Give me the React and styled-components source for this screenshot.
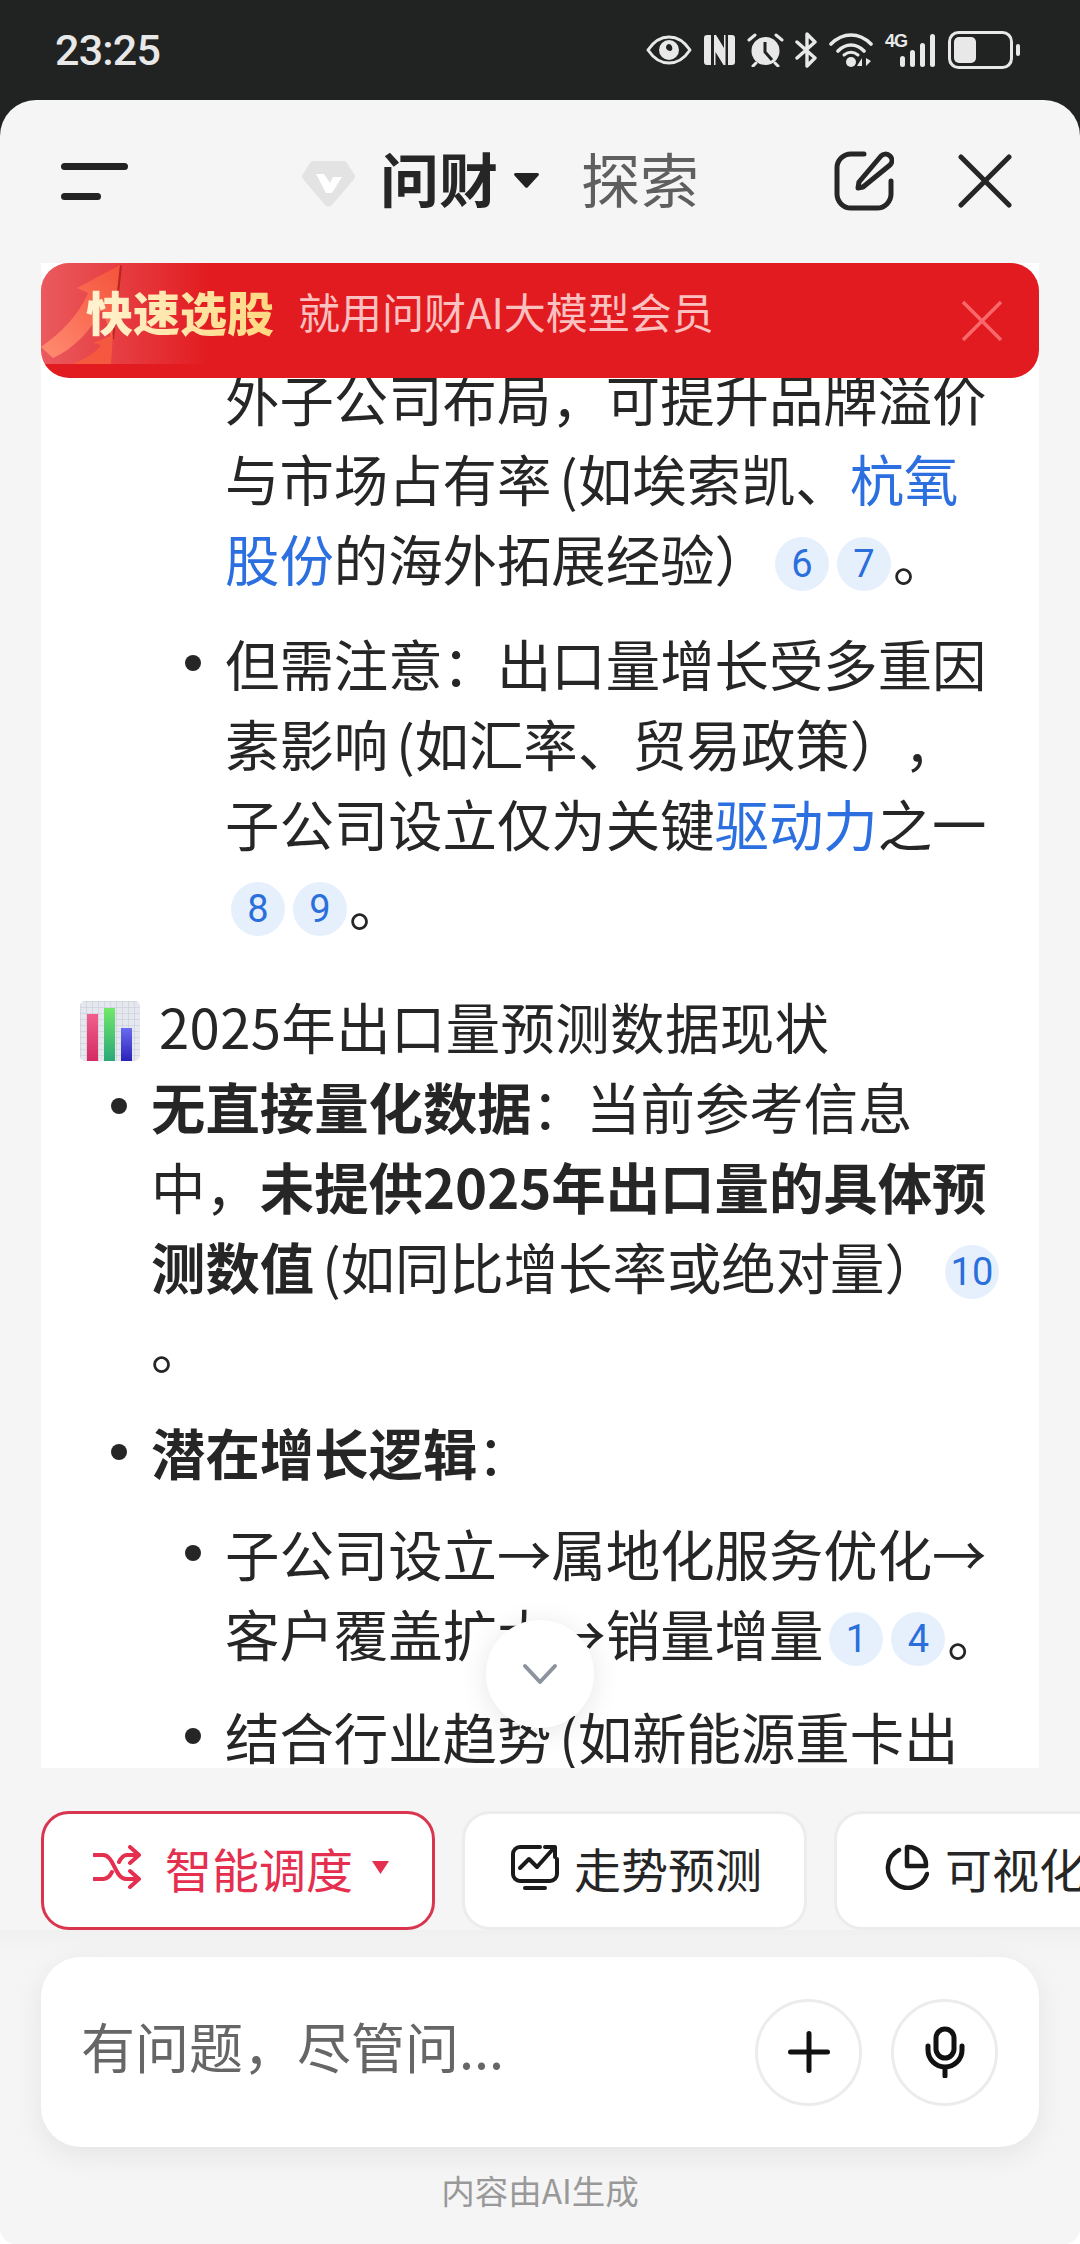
import React from 'react';
import styled, { createGlobalStyle } from 'styled-components';

const GlobalStyle = createGlobalStyle`
    html, body {
        margin: 0;
        padding: 0;
        background: #fff;
    }
    * {
        box-sizing: border-box;
    }
`;

const FONT = `"Noto Sans CJK SC", "Noto Sans", sans-serif`;

const Badge = ({ n }) => <Cite>{n}</Cite>;

const App = () => {
    return (
        <Page>
            <GlobalStyle />
            <StatusBar>
                <Clock>23:25</Clock>
                <StatusIcons>
                    <svg width="46" height="30" viewBox="0 0 46 30">
                        <path d="M2 15C8 6 15 2 23 2s15 4 21 13c-6 9-13 13-21 13S8 24 2 15z" fill="none" stroke="#e8e8e8" strokeWidth="3" strokeLinejoin="round" />
                        <path fillRule="evenodd" d="M23 5a10 10 0 1 0 0 20 10 10 0 0 0 0-20zm-1 4a4 4 0 0 1 3 7 5 5 0 0 1-5-3 4 4 0 0 1 2-4z" fill="#e8e8e8" />
                    </svg>
                    <NfcIcon width="31" height="32" viewBox="0 0 31 32">
                        <path d="M3 1h4v30H3a3 3 0 0 1-3-3V4a3 3 0 0 1 3-3zM24 1h4a3 3 0 0 1 3 3v24a3 3 0 0 1-3 3h-4z" fill="#e8e8e8" />
                        <path d="M10 1h2l8 13V1h1.5v30h-2l-8-13v13H10z" fill="#e8e8e8" />
                    </NfcIcon>
                    <AlarmIcon width="37" height="34" viewBox="0 0 37 34">
                        <circle cx="18.5" cy="18" r="14" fill="#e8e8e8" />
                        <path d="M18 9v10l7 8" fill="none" stroke="#212323" strokeWidth="3" />
                        <path d="M2 7l6-5M35 7l-6-5M6 33l3-3M31 33l-3-3" stroke="#e8e8e8" strokeWidth="3" strokeLinecap="round" />
                    </AlarmIcon>
                    <BluetoothIcon width="22" height="36" viewBox="0 0 22 36">
                        <path d="M2 10l18 16-8 8V2l8 8L2 26" fill="none" stroke="#e8e8e8" strokeWidth="3.4" strokeLinejoin="round" strokeLinecap="round" />
                    </BluetoothIcon>
                    <WifiIcon width="44" height="36" viewBox="0 0 44 36">
                        <path d="M2 12C14 0 30 0 42 12M9 19c8-8 18-8 26 0" fill="none" stroke="#e8e8e8" strokeWidth="3.6" strokeLinecap="round" />
                        <path d="M15 23c5-4 9-4 14 0" fill="none" stroke="#e8e8e8" strokeWidth="3" strokeLinecap="round" />
                        <circle cx="22" cy="30" r="5" fill="#e8e8e8" />
                        <path d="M33 34v-8l-5 8zM37 26v8l5-5z" fill="#e8e8e8" />
                    </WifiIcon>
                    <Signal>
                        <SignalLabel>4G</SignalLabel>
                        <Bar $h={11} />
                        <Bar $h={17} />
                        <Bar $h={24} />
                        <Bar $h={33} />
                    </Signal>
                    <svg width="73" height="38" viewBox="0 0 73 38">
                        <rect x="1.5" y="1.5" width="62" height="35" rx="9" fill="none" stroke="#e8e8e8" strokeWidth="3" />
                        <rect x="6" y="6" width="22" height="26" rx="5" fill="#e8e8e8" />
                        <rect x="68" y="13" width="4" height="12" rx="2" fill="#e8e8e8" />
                    </svg>
                </StatusIcons>
            </StatusBar>

            <Sheet>
                <Header>
                    <MenuButton>
                        <MenuLine $w={67} />
                        <MenuLine $w={40} />
                    </MenuButton>
                    <Nav>
                        <LogoMark width="53" height="46" viewBox="0 0 53 46">
                            <path d="M11 0h31a4 4 0 0 1 3 2l7 11a4 4 0 0 1 0 5L30 44a5 5 0 0 1-7 0L1 18a4 4 0 0 1 0-5L8 2a4 4 0 0 1 3-2z" fill="#e3e3e3" />
                            <path d="M14 13l8 0 6 9 3-6h9l-10 16h-6z" fill="#fff" />
                        </LogoMark>
                        <Title>问财</Title>
                        <NavCaret width="25" height="15" viewBox="0 0 25 15">
                            <path d="M1.5 0h22a1.5 1.5 0 0 1 1 2.5L14 14a2 2 0 0 1-3 0L.5 2.5A1.5 1.5 0 0 1 1.5 0z" fill="#222" />
                        </NavCaret>
                        <NavLink>探索</NavLink>
                    </Nav>
                    <Actions>
                        <svg width="60" height="60" viewBox="0 0 60 60">
                            <path d="M30 3H17A14 14 0 0 0 3 17v26a14 14 0 0 0 14 14h26a14 14 0 0 0 14-14V30" fill="none" stroke="#262626" strokeWidth="5" strokeLinecap="round" />
                            <path d="M29 36l-5 1 1-6L47 5c2-2 6-3 9 0s2 7 0 9z" fill="none" stroke="#262626" strokeWidth="5" strokeLinejoin="round" />
                        </svg>
                        <svg width="54" height="54" viewBox="0 0 54 54">
                            <path d="M3 3l48 48M51 3L3 51" fill="none" stroke="#262626" strokeWidth="5" strokeLinecap="round" />
                        </svg>
                    </Actions>
                </Header>

                <ChatArea>
                    <Scroller>
                        <TopList>
                            <li>
                                <SubList>
                                    <SubItem $continued>
                                        外子公司布局，可提升品牌溢价与市场占有率<OpenParen>(</OpenParen>如埃索凯、<Term>杭氧股份</Term>的海外拓展经验）
                                        <Badge n="6" /><Badge n="7" />。
                                    </SubItem>
                                    <SubItem>
                                        但需注意：出口量增长受多重因素影响<OpenParen>(</OpenParen>如汇率、贸易政策），子公司设立仅为关键<Term>驱动力</Term>之一
                                        <Badge n="8" /><Badge n="9" />。
                                    </SubItem>
                                </SubList>
                            </li>
                        </TopList>

                        <SectionTitle>
                            <SectionIcon width="60" height="60" viewBox="0 0 60 60">
                                <defs>
                                    <pattern id="gridCell" width="6" height="6" patternUnits="userSpaceOnUse">
                                        <path d="M6 0H0v6" fill="none" stroke="#c3c8d4" strokeWidth="1" />
                                    </pattern>
                                    <linearGradient id="pinkBar" x1="0" y1="0" x2="0" y2="1">
                                        <stop offset="0" stopColor="#f0608c" />
                                        <stop offset="1" stopColor="#d42a62" />
                                    </linearGradient>
                                    <linearGradient id="greenBar" x1="0" y1="0" x2="0" y2="1">
                                        <stop offset="0" stopColor="#72e86a" />
                                        <stop offset="1" stopColor="#2aa878" />
                                    </linearGradient>
                                    <linearGradient id="blueBar" x1="0" y1="0" x2="0" y2="1">
                                        <stop offset="0" stopColor="#6a6cf0" />
                                        <stop offset="1" stopColor="#2a22b8" />
                                    </linearGradient>
                                </defs>
                                <rect width="60" height="60" rx="5" fill="#e6e8ef" />
                                <rect width="60" height="60" rx="5" fill="url(#gridCell)" />
                                <rect x="7" y="13" width="11" height="47" fill="url(#pinkBar)" />
                                <rect x="24" y="7" width="11" height="53" fill="url(#greenBar)" />
                                <rect x="41" y="27" width="11" height="33" fill="url(#blueBar)" />
                            </SectionIcon>
                            2025年出口量预测数据现状
                        </SectionTitle>

                        <TopList>
                            <TopItem>
                                <strong>无直接量化数据</strong>：当前参考信息中，<strong>未提供2025年出口量的具体预测数值</strong><OpenParen>(</OpenParen>如同比增长率或绝对量）
                                <Badge n="10" />。
                            </TopItem>
                            <TopItem>
                                <strong>潜在增长逻辑</strong>：
                                <SubList>
                                    <SubItem>
                                        子公司设立→属地化服务优化→客户覆盖扩大→销量增量<Badge n="1" /><Badge n="4" />。
                                    </SubItem>
                                    <SubItem>结合行业趋势<OpenParen>(</OpenParen>如新能源重卡出口增长）</SubItem>
                                </SubList>
                            </TopItem>
                        </TopList>
                    </Scroller>

                    <Banner>
                        <BannerArt width="170" height="101" viewBox="0 0 170 101">
                            <defs>
                                <linearGradient id="bannerFade" x1="0" y1="0" x2="1" y2="0">
                                    <stop offset="0" stopColor="#fff" stopOpacity="0.28" />
                                    <stop offset="1" stopColor="#fff" stopOpacity="0" />
                                </linearGradient>
                                <linearGradient id="arrowFill" x1="0" y1="1" x2="1" y2="0">
                                    <stop offset="0" stopColor="#ff8d72" />
                                    <stop offset="1" stopColor="#f4523a" />
                                </linearGradient>
                            </defs>
                            <path d="M0 0h170v101H0z" fill="url(#bannerFade)" />
                            <path d="M0 84C20 70 38 52 47 30L36 25 79 2 71 76 61 46C50 68 32 86 12 95z" fill="url(#arrowFill)" />
                            <path d="M79 2l2 1-8 73-2 0z" fill="#b8261f" />
                            <path d="M31 101C44 96 54 90 60 82L52 80 72 72 70 101z" fill="#f4583f" />
                        </BannerArt>
                        <BannerLead>快速选股</BannerLead>
                        <BannerText>就用问财AI大模型会员</BannerText>
                        <BannerClose width="40" height="40" viewBox="0 0 40 40">
                            <path d="M1 1l38 38M39 1L1 39" fill="none" stroke="#f9696c" strokeWidth="3.5" />
                        </BannerClose>
                    </Banner>

                    <ScrollDown>
                        <svg width="36" height="22" viewBox="0 0 36 22">
                            <path d="M3 3l15 16L33 3" fill="none" stroke="#8c939f" strokeWidth="4" strokeLinecap="round" strokeLinejoin="round" />
                        </svg>
                    </ScrollDown>
                </ChatArea>

                <ChipRow>
                    <Chip $active $w={394} $pad={49} $gap={22}>
                        <svg width="50" height="44" viewBox="0 0 50 44">
                            <path d="M1 10h9c11 0 12 24 23 24h12M1 34h9c4 0 7-3 9-7M26 17c2-4 4-7 8-7h11M37 2l9 8-9 8M37 26l9 8-9 8" fill="none" stroke="#e52f4f" strokeWidth="4" strokeLinecap="round" strokeLinejoin="round" />
                        </svg>
                        智能调度
                        <ChipCaret width="17" height="13" viewBox="0 0 17 13">
                            <path d="M0 0h17l-8.5 13z" fill="#e52f4f" />
                        </ChipCaret>
                    </Chip>
                    <Chip $w={345} $pad={46} $gap={15}>
                        <svg width="48" height="46" viewBox="0 0 48 46">
                            <path d="M29 3H9a7 7 0 0 0-7 7v20a7 7 0 0 0 7 7h30a7 7 0 0 0 7-7V15" fill="none" stroke="#1a1a1a" strokeWidth="4" strokeLinecap="round" />
                            <path d="M9 24l9-9 8 8 16-18M34 3h10v10M14 44h20" fill="none" stroke="#1a1a1a" strokeWidth="4" strokeLinecap="round" strokeLinejoin="round" />
                        </svg>
                        走势预测
                    </Chip>
                    <Chip $w={320} $pad={48} $gap={16}>
                        <svg width="44" height="46" viewBox="0 0 44 46">
                            <path d="M14 6a20 20 0 1 0 28 24" fill="none" stroke="#1a1a1a" strokeWidth="4.5" strokeLinecap="round" />
                            <path d="M22 3a18 18 0 0 1 19 19H22z" fill="none" stroke="#1a1a1a" strokeWidth="4.5" strokeLinejoin="round" />
                        </svg>
                        可视化
                    </Chip>
                </ChipRow>

                <Footer>
                    <InputCard>
                        <Placeholder>有问题，尽管问...</Placeholder>
                        <RoundButton>
                            <svg width="42" height="42" viewBox="0 0 42 42">
                                <path d="M2.5 21h37M21 2.5v37" fill="none" stroke="#111" strokeWidth="5" strokeLinecap="round" />
                            </svg>
                        </RoundButton>
                        <RoundButton>
                            <svg width="40" height="52" viewBox="0 0 40 52">
                                <rect x="11" y="3" width="18" height="29" rx="9" fill="none" stroke="#111" strokeWidth="5" />
                                <path d="M3 20v4a17 17 0 0 0 34 0v-4M20 41v9" fill="none" stroke="#111" strokeWidth="5" strokeLinecap="round" />
                            </svg>
                        </RoundButton>
                    </InputCard>
                    <Note>内容由AI生成</Note>
                </Footer>
            </Sheet>
        </Page>
    );
};

export default App;

const Page = styled.div`
    width: 1080px;
    height: 2244px;
    background: #212323;
    font-family: ${FONT};
    overflow: hidden;
    position: relative;

    &::after {
        content: "";
        position: absolute;
        left: 0;
        right: 0;
        bottom: 0;
        height: 30px;
        background: #fff;
        z-index: 0;
    }
`;

const StatusBar = styled.div`
    height: 100px;
    padding: 0 59px 0 55px;
    display: flex;
    align-items: center;
    justify-content: space-between;
`;

const Clock = styled.div`
    font-family: Roboto, sans-serif;
    font-size: 43px;
    font-weight: 500;
    color: #e8e8e8;
    letter-spacing: -0.8px;
`;

const StatusIcons = styled.div`
    display: flex;
    align-items: center;
`;

const NfcIcon = styled.svg`
    margin-left: 12px;
`;

const AlarmIcon = styled.svg`
    margin-left: 12px;
`;

const BluetoothIcon = styled.svg`
    margin-left: 11px;
`;

const WifiIcon = styled.svg`
    margin-left: 12px;
`;

const Signal = styled.div`
    position: relative;
    width: 50px;
    height: 34px;
    margin: 0 13px 0 12px;
    display: flex;
    align-items: flex-end;
    justify-content: flex-end;
    gap: 5px;
`;

const SignalLabel = styled.span`
    position: absolute;
    left: 0;
    top: -2px;
    font-family: "Liberation Sans", sans-serif;
    font-size: 18px;
    font-weight: 700;
    line-height: 20px;
    letter-spacing: -1px;
    color: #e8e8e8;
`;

const Bar = styled.i`
    display: block;
    width: 5px;
    height: ${(p) => p.$h}px;
    border-radius: 3px;
    background: #e8e8e8;
`;

const Sheet = styled.div`
    position: relative;
    z-index: 1;
    height: 2144px;
    background: #f5f5f5;
    border-radius: 36px 36px 16px 16px;
    display: flex;
    flex-direction: column;
    overflow: hidden;
`;

const Header = styled.div`
    height: 163px;
    flex-shrink: 0;
    padding: 0 68px 0 61px;
    display: flex;
    align-items: flex-start;
`;

const MenuButton = styled.div`
    margin-top: 63px;
    display: flex;
    flex-direction: column;
    gap: 23px;
`;

const MenuLine = styled.span`
    display: block;
    width: ${(p) => p.$w}px;
    height: 7px;
    border-radius: 4px;
    background: #222;
`;

const Nav = styled.div`
    margin-left: 174px;
    height: 155px;
    display: flex;
    align-items: center;
`;

const LogoMark = styled.svg`
    margin-top: 12px;
`;

const Title = styled.div`
    margin: 0 16px 0 25px;
    font-size: 59px;
    font-weight: 700;
    color: #262626;
`;

const NavCaret = styled.svg`
    margin-top: 5px;
`;

const NavLink = styled.div`
    margin-left: 42px;
    font-size: 59px;
    color: #5f5f5f;
`;

const Actions = styled.div`
    margin-left: auto;
    height: 162px;
    display: flex;
    align-items: center;
    gap: 64px;
`;

const ChatArea = styled.div`
    position: relative;
    flex-shrink: 0;
    height: 1505px;
    margin: 0 41px;
`;

const Scroller = styled.div`
    height: 100%;
    padding: 95px 34px 0 0;
    background: #fff;
    overflow: hidden;
    font-size: 54.4px;
    line-height: 80px;
    color: #262626;
    text-spacing-trim: space-all;

    strong {
        font-weight: 700;
    }
`;

const TopList = styled.ul`
    margin: 0;
    padding: 0 0 0 110px;
    list-style: none;
`;

const TopItem = styled.li`
    position: relative;
    margin-top: 26px;

    &:first-child {
        margin-top: 0;
    }

    &::before {
        content: "";
        position: absolute;
        left: -40px;
        top: 32px;
        width: 16px;
        height: 16px;
        border-radius: 50%;
        background: #262626;
    }
`;

const SubList = styled.ul`
    margin: 21px 0 0;
    padding: 0 0 0 74px;
    list-style: none;

    &:first-child {
        margin-top: 0;
    }
`;

const SubItem = styled.li`
    position: relative;
    margin-top: 23px;
    padding-bottom: ${(p) => (p.$continued ? '2px' : '0')};

    &:first-child {
        margin-top: 0;
    }

    &::before {
        content: "";
        position: absolute;
        display: ${(p) => (p.$continued ? 'none' : 'block')};
        left: -40px;
        top: 32px;
        width: 16px;
        height: 16px;
        border-radius: 50%;
        background: #262626;
    }
`;

const OpenParen = styled.span`
    margin-left: 8px;
`;

const SectionTitle = styled.div`
    margin-top: 43px;
    padding-left: 39px;
    display: flex;
    align-items: center;
    gap: 19px;
    letter-spacing: 0.4px;
`;

const SectionIcon = styled.svg`
    margin-top: 9px;
`;

const Term = styled.span`
    color: #2b6fe0;
`;

const Cite = styled.span`
    display: inline-flex;
    align-items: center;
    justify-content: center;
    width: 54px;
    height: 54px;
    margin: 0 2px 0 6px;
    border-radius: 50%;
    background: #e6f0fd;
    color: #2a6fdb;
    font-family: Roboto, sans-serif;
    font-size: 38px;
    line-height: 1;
    vertical-align: 4px;
`;

const Banner = styled.div`
    position: absolute;
    top: 0;
    left: 0;
    right: 0;
    height: 115px;
    padding: 0 37px 20px 45px;
    background: #e21b20;
    border-radius: 28px;
    overflow: hidden;
    display: flex;
    align-items: center;
`;

const BannerArt = styled.svg`
    position: absolute;
    left: 0;
    top: 0;
`;

const BannerLead = styled.div`
    position: relative;
    font-size: 47px;
    font-weight: 900;
    background: linear-gradient(90deg, #fff3d2, #ffd77f);
    -webkit-background-clip: text;
    background-clip: text;
    color: transparent;
`;

const BannerText = styled.div`
    position: relative;
    margin-left: 24px;
    font-size: 42px;
    color: #fbc0bf;
`;

const BannerClose = styled.svg`
    margin-left: auto;
    margin-top: 20px;
`;

const ScrollDown = styled.div`
    position: absolute;
    left: 445px;
    top: 1357px;
    width: 108px;
    height: 108px;
    border-radius: 50%;
    background: #fff;
    box-shadow: 0 4px 28px rgba(0, 0, 0, 0.1);
    display: flex;
    align-items: center;
    justify-content: center;
`;

const ChipRow = styled.div`
    flex-shrink: 0;
    margin-top: 43px;
    padding-left: 41px;
    display: flex;
    gap: 27px;
    overflow: hidden;
`;

const Chip = styled.div`
    flex-shrink: 0;
    width: ${(p) => p.$w}px;
    height: 119px;
    padding: 0 0 7px ${(p) => p.$pad}px;
    display: flex;
    align-items: center;
    gap: ${(p) => p.$gap}px;
    background: #fff;
    border: 3px solid ${(p) => (p.$active ? '#d9354f' : '#ececec')};
    border-radius: 28px;
    font-size: 47px;
    white-space: nowrap;
    color: ${(p) => (p.$active ? '#e52f4f' : '#262626')};
`;

const ChipCaret = styled.svg`
    margin-left: -3px;
`;

const Footer = styled.div`
    flex: 1;
    padding: 27px 41px 0;
    display: flex;
    flex-direction: column;
    align-items: center;
    background: linear-gradient(180deg, #f0f0f0 0, #f5f5f5 27px);
`;

const InputCard = styled.div`
    width: 100%;
    height: 190px;
    padding: 0 41px 0 40px;
    display: flex;
    align-items: center;
    gap: 29px;
    background: #fff;
    border-radius: 40px;
    box-shadow: 0 8px 30px rgba(0, 0, 0, 0.07);
`;

const Placeholder = styled.div`
    flex: 1;
    padding-bottom: 14px;
    font-size: 54px;
    color: #666;
`;

const RoundButton = styled.div`
    width: 107px;
    height: 107px;
    border-radius: 50%;
    border: 3px solid #ececec;
    display: flex;
    align-items: center;
    justify-content: center;
`;

const Note = styled.div`
    margin-top: 21px;
    font-size: 33.5px;
    line-height: 44px;
    color: #999;
`;
